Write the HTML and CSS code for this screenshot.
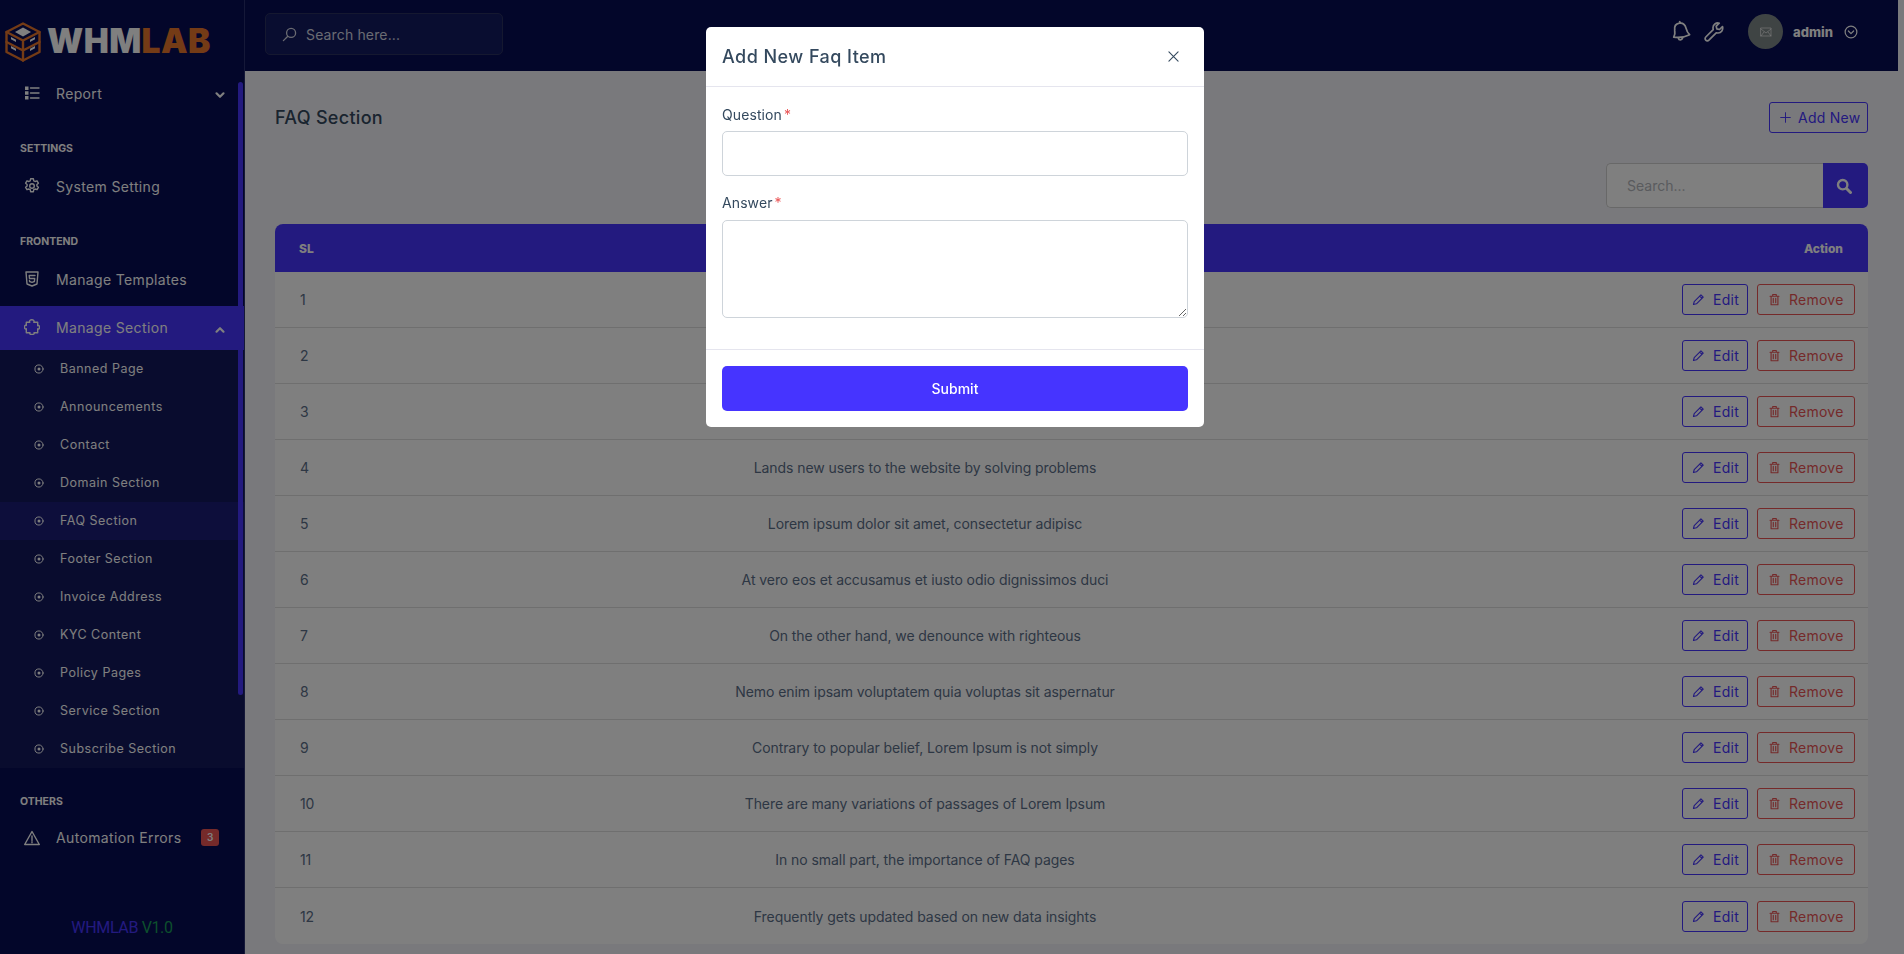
FILE: index.html
```html
<!DOCTYPE html>
<html lang="en">
<head>
    <meta charset="UTF-8">
    <meta name="viewport" content="width=device-width, initial-scale=1.0">
    <title>FAQ Section</title>
    <link rel="stylesheet" href="styles.css">
</head>
<body>
    <svg class="sprite" xmlns="http://www.w3.org/2000/svg">
        <symbol id="i-list" viewBox="0 0 16 16"><path d="M1 1.500h3.500v3.500H1zM1 6.300h3.500v3.500H1zM1 11h3.500v3.500H1z" fill="currentColor" stroke="none"/><path d="M6.500 3h8.500M6.500 8h8.500M6.500 13h8.500"/></symbol>
        <symbol id="i-gear" viewBox="0 0 16 16"><circle cx="8" cy="8" r="2.300"/><path d="M6.600.8h2.800l.4 2 1.300.7 1.900-.7 1.400 2.400-1.500 1.300v1.500l1.500 1.300-1.400 2.400-1.900-.7-1.300.7-.4 2H6.600l-.4-2-1.300-.7-1.900.7-1.400-2.400 1.500-1.300V6.500L1.600 5.200 3 2.800l1.900.7 1.300-.7z"/></symbol>
        <symbol id="i-html" viewBox="0 0 16 16"><path d="M2 1h12l-1 12-5 2-5-2z"/><path d="M11 4.500H5.200l.3 3h5.200l-.3 3-2.400.8-2.400-.8-.1-1"/></symbol>
        <symbol id="i-puzzle" viewBox="0 0 16 16"><path d="M5.800 3.300C5 1.700 6.300.7 7.800.7s2.800 1 2 2.600h3.900v3.400c1.200-.7 1.800.4 1.800 1.500s-.6 2.300-1.800 1.600v3.900H10c.7 1.200-.6 1.800-2 1.800s-2.800-.6-2.100-1.800H2.300V9.800C1 10.500.5 9.300.5 8.100S1 5.800 2.300 6.500V3.300z"/></symbol>
        <symbol id="i-warn" viewBox="0 0 16 16"><path d="M8 1.500 15.300 14.500H.7z"/><path d="M8 6v4.500M8 11.600v1.200"/></symbol>
        <symbol id="i-dot" viewBox="0 0 16 16"><circle cx="8" cy="8" r="6.500" stroke-width="1.600"/><circle cx="8" cy="8" r="2.400" fill="currentColor" stroke="none"/></symbol>
        <symbol id="i-chev" viewBox="0 0 12 12"><path d="M2.500 4.300 6 7.800l3.500-3.500" stroke-width="2.200"/></symbol>
        <symbol id="i-find" viewBox="0 0 16 16"><circle cx="9.700" cy="6.300" r="4.800"/><path d="M6.200 9.800 1.500 14.500"/></symbol>
        <symbol id="i-bell" viewBox="0 0 20 22"><path d="M9.500 3c3.800-.3 5.500 2.500 6 5.500.4 2.600 1.200 4.500 2.800 6.300-4.500 1.900-9.500 2.100-15.300 1 1.300-2 1.700-4 1.500-6.300C4.300 6.400 5.700 3.300 9.500 3z" transform="rotate(-5 10 10)"/><path d="M9.200 1.600 10 3M8 17.500c.5 2 3.300 2 4-.2"/></symbol>
        <symbol id="i-wrench" viewBox="0 0 20 20"><path d="M18.500 4.500 15.500 7.500l-2.700-.6-.6-2.700 3-3c-3-.9-6.400 1.300-6.200 4.800l.2 1.700L1.800 15a2.200 2.200 0 0 0 3.100 3.200l7.300-7.400 1.700.2c3.500.1 5.500-3.500 4.600-6.500z"/></symbol>
        <symbol id="i-down" viewBox="0 0 16 16"><circle cx="8" cy="8" r="6.700"/><path d="M5 6.800 8 9.800l3-3"/></symbol>
        <symbol id="i-pencil" viewBox="0 0 16 16"><path d="M11 2.200 13.800 5 5.500 13.300 1.800 14.200l.9-3.700zM9.500 3.700l2.800 2.800"/></symbol>
        <symbol id="i-trash" viewBox="0 0 16 16"><path d="M2.500 4h11M5.800 4V1.800h4.400V4M3.800 4v10.500h8.400V4M6.500 6.500v5.500M9.500 6.500v5.500"/></symbol>
        <symbol id="i-plus" viewBox="0 0 16 16"><path d="M8 1v14M1 8h14"/></symbol>
        <symbol id="i-loupe" viewBox="0 0 16 16"><circle cx="6.700" cy="6.700" r="4.700" stroke-width="2.400"/><path d="m10.500 10.500 4 4" stroke-width="3"/></symbol>
        <symbol id="i-close" viewBox="0 0 12 12"><path d="m1 1 10 10M11 1 1 11"/></symbol>
    </svg>

    <div class="layout">
        <aside class="sidebar">
            <div class="brand">
                <svg class="brand-mark" viewBox="0 0 36 40">
                    <path d="M18 1.500 34.500 10v20L18 38.500 1.500 30V10z" fill="none" stroke="#e8762c" stroke-width="2.400"/>
                    <path d="M1.500 10 18 18.500 34.500 10M1.500 20 18 28.500 34.500 20M18 18.500v20" fill="none" stroke="#e8762c" stroke-width="2.400"/>
                    <path d="M18 5.500 26 10l-8 4.500-8-4.500z" fill="#fff" stroke="none"/>
                    <path d="M6 15l5 2.700v2.300l-5-2.700zM25 17.700l5-2.700v2.300l-5 2.700zM6 24l5 2.700V29l-5-2.700zM25 26.700l5-2.700v2.300L25 29z" fill="#fff" stroke="none"/>
                </svg>
                <span class="brand-name">WHM<span class="brand-accent">LAB</span></span>
            </div>

            <a class="nav-row"><svg class="nav-icon"><use href="#i-list"/></svg>Report<svg class="nav-chev"><use href="#i-chev"/></svg></a>

            <div class="nav-label">SETTINGS</div>
            <a class="nav-row"><svg class="nav-icon"><use href="#i-gear"/></svg>System Setting</a>

            <div class="nav-label">FRONTEND</div>
            <a class="nav-row"><svg class="nav-icon"><use href="#i-html"/></svg>Manage Templates</a>
            <a class="nav-row nav-row-active"><svg class="nav-icon"><use href="#i-puzzle"/></svg>Manage Section<svg class="nav-chev nav-chev-up"><use href="#i-chev"/></svg></a>
            <div class="submenu">
                <a class="sub-row"><svg class="sub-icon"><use href="#i-dot"/></svg>Banned Page</a>
                <a class="sub-row"><svg class="sub-icon"><use href="#i-dot"/></svg>Announcements</a>
                <a class="sub-row"><svg class="sub-icon"><use href="#i-dot"/></svg>Contact</a>
                <a class="sub-row"><svg class="sub-icon"><use href="#i-dot"/></svg>Domain Section</a>
                <a class="sub-row sub-row-active"><svg class="sub-icon"><use href="#i-dot"/></svg>FAQ Section</a>
                <a class="sub-row"><svg class="sub-icon"><use href="#i-dot"/></svg>Footer Section</a>
                <a class="sub-row"><svg class="sub-icon"><use href="#i-dot"/></svg>Invoice Address</a>
                <a class="sub-row"><svg class="sub-icon"><use href="#i-dot"/></svg>KYC Content</a>
                <a class="sub-row"><svg class="sub-icon"><use href="#i-dot"/></svg>Policy Pages</a>
                <a class="sub-row"><svg class="sub-icon"><use href="#i-dot"/></svg>Service Section</a>
                <a class="sub-row"><svg class="sub-icon"><use href="#i-dot"/></svg>Subscribe Section</a>
            </div>

            <div class="nav-label">OTHERS</div>
            <a class="nav-row nav-row-errors"><svg class="nav-icon"><use href="#i-warn"/></svg>Automation Errors<span class="nav-badge">3</span></a>

            <div class="version"><span class="version-name">WHMLAB</span> <span class="version-num">V1.0</span></div>
            <div class="side-thumb"></div>
        </aside>

        <div class="main">
            <header class="topbar">
                <div class="top-search"><svg class="top-search-icon"><use href="#i-find"/></svg>Search here...</div>
                <div class="top-tools">
                    <svg class="top-bell"><use href="#i-bell"/></svg>
                    <svg class="top-wrench"><use href="#i-wrench"/></svg>
                    <div class="avatar"><svg viewBox="0 0 12 10"><path d="M1 1h10v8H1zM1 2l5 4 5-4M1 9l3-4M11 9 8 5"/></svg></div>
                    <span class="top-user">admin</span>
                    <svg class="top-down"><use href="#i-down"/></svg>
                </div>
            </header>

            <main class="content">
                <div class="title-row">
                    <h1>FAQ Section</h1>
                    <a class="btn-add"><svg class="btn-icon"><use href="#i-plus"/></svg>Add New</a>
                </div>
                <div class="filter-row">
                    <div class="filter">
                        <span class="filter-input">Search...</span>
                        <span class="filter-btn"><svg><use href="#i-loupe"/></svg></span>
                    </div>
                </div>

                <table class="faq-table">
                    <colgroup><col class="col-sl"><col><col class="col-action"></colgroup>
                    <thead>
                        <tr><th class="cell-left">SL</th><th>Question</th><th class="cell-right">Action</th></tr>
                    </thead>
                    <tbody>
                        <tr><td class="cell-left">1</td><td>What is a FAQ page</td><td class="cell-actions"><a class="btn-edit"><svg class="btn-icon"><use href="#i-pencil"/></svg>Edit</a><a class="btn-remove"><svg class="btn-icon"><use href="#i-trash"/></svg>Remove</a></td></tr>
                        <tr><td class="cell-left">2</td><td>Why a FAQ page matters</td><td class="cell-actions"><a class="btn-edit"><svg class="btn-icon"><use href="#i-pencil"/></svg>Edit</a><a class="btn-remove"><svg class="btn-icon"><use href="#i-trash"/></svg>Remove</a></td></tr>
                        <tr><td class="cell-left">3</td><td>How to write a FAQ page</td><td class="cell-actions"><a class="btn-edit"><svg class="btn-icon"><use href="#i-pencil"/></svg>Edit</a><a class="btn-remove"><svg class="btn-icon"><use href="#i-trash"/></svg>Remove</a></td></tr>
                        <tr><td class="cell-left">4</td><td>Lands new users to the website by solving problems</td><td class="cell-actions"><a class="btn-edit"><svg class="btn-icon"><use href="#i-pencil"/></svg>Edit</a><a class="btn-remove"><svg class="btn-icon"><use href="#i-trash"/></svg>Remove</a></td></tr>
                        <tr><td class="cell-left">5</td><td>Lorem ipsum dolor sit amet, consectetur adipisc</td><td class="cell-actions"><a class="btn-edit"><svg class="btn-icon"><use href="#i-pencil"/></svg>Edit</a><a class="btn-remove"><svg class="btn-icon"><use href="#i-trash"/></svg>Remove</a></td></tr>
                        <tr><td class="cell-left">6</td><td>At vero eos et accusamus et iusto odio dignissimos duci</td><td class="cell-actions"><a class="btn-edit"><svg class="btn-icon"><use href="#i-pencil"/></svg>Edit</a><a class="btn-remove"><svg class="btn-icon"><use href="#i-trash"/></svg>Remove</a></td></tr>
                        <tr><td class="cell-left">7</td><td>On the other hand, we denounce with righteous</td><td class="cell-actions"><a class="btn-edit"><svg class="btn-icon"><use href="#i-pencil"/></svg>Edit</a><a class="btn-remove"><svg class="btn-icon"><use href="#i-trash"/></svg>Remove</a></td></tr>
                        <tr><td class="cell-left">8</td><td>Nemo enim ipsam voluptatem quia voluptas sit aspernatur</td><td class="cell-actions"><a class="btn-edit"><svg class="btn-icon"><use href="#i-pencil"/></svg>Edit</a><a class="btn-remove"><svg class="btn-icon"><use href="#i-trash"/></svg>Remove</a></td></tr>
                        <tr><td class="cell-left">9</td><td>Contrary to popular belief, Lorem Ipsum is not simply</td><td class="cell-actions"><a class="btn-edit"><svg class="btn-icon"><use href="#i-pencil"/></svg>Edit</a><a class="btn-remove"><svg class="btn-icon"><use href="#i-trash"/></svg>Remove</a></td></tr>
                        <tr><td class="cell-left">10</td><td>There are many variations of passages of Lorem Ipsum</td><td class="cell-actions"><a class="btn-edit"><svg class="btn-icon"><use href="#i-pencil"/></svg>Edit</a><a class="btn-remove"><svg class="btn-icon"><use href="#i-trash"/></svg>Remove</a></td></tr>
                        <tr><td class="cell-left">11</td><td>In no small part, the importance of FAQ pages</td><td class="cell-actions"><a class="btn-edit"><svg class="btn-icon"><use href="#i-pencil"/></svg>Edit</a><a class="btn-remove"><svg class="btn-icon"><use href="#i-trash"/></svg>Remove</a></td></tr>
                        <tr><td class="cell-left">12</td><td>Frequently gets updated based on new data insights</td><td class="cell-actions"><a class="btn-edit"><svg class="btn-icon"><use href="#i-pencil"/></svg>Edit</a><a class="btn-remove"><svg class="btn-icon"><use href="#i-trash"/></svg>Remove</a></td></tr>
                    </tbody>
                </table>
            </main>
        </div>
    </div>

    <div class="backdrop"></div>
    <div class="modal">
        <div class="modal-head">
            <h2>Add New Faq Item</h2>
            <svg class="modal-close"><use href="#i-close"/></svg>
        </div>
        <div class="modal-body">
            <label class="field-label" for="question">Question<span class="req">*</span></label>
            <input class="field-input" id="question" type="text">
            <label class="field-label field-label-next" for="answer">Answer<span class="req">*</span></label>
            <textarea class="field-area" id="answer"></textarea>
        </div>
        <div class="modal-foot">
            <button class="btn-submit">Submit</button>
        </div>
    </div>
</body>
</html>
```

FILE: styles.css
```css
* {
    box-sizing: border-box;
}

html, body {
    height: 954px;
    overflow: hidden;
}

body {
    margin: 0;
    background: #f3f3f9;
    font-family: 'Inter', 'Open Sans', sans-serif;
    font-size: 14px;
    color: #5b6e88;
}

svg {
    fill: none;
    stroke: currentColor;
    stroke-width: 1.4;
    stroke-linecap: round;
    stroke-linejoin: round;
}

.sprite {
    display: none;
}

.layout {
    display: flex;
    width: 1898px;
    height: 954px;
}

/* sidebar */
.sidebar {
    position: relative;
    flex: 0 0 245px;
    background: #060c54;
    border-right: 1px solid #2b3070;
    color: #fff;
}

.brand {
    display: flex;
    align-items: center;
    gap: 6px;
    height: 71px;
    padding: 12px 0 0 5px;
}

.brand-mark {
    width: 36px;
    height: 40px;
}

.brand-name {
    font-size: 33.5px;
    font-weight: 900;
    letter-spacing: 0.4px;
    line-height: 1;
}

.brand-accent {
    color: #e8762c;
}

.nav-row {
    display: flex;
    align-items: center;
    height: 44px;
    padding-left: 24px;
    font-size: 14px;
    letter-spacing: 0.35px;
}

.nav-row-active {
    margin-top: 5px;
    padding-bottom: 2px;
    background: #4634ff;
}

.nav-row-errors {
    padding-bottom: 3px;
}

.nav-icon {
    width: 16px;
    height: 16px;
    margin-right: 16px;
}

.nav-chev {
    width: 12px;
    height: 12px;
    margin-left: auto;
    margin-right: 18px;
    margin-top: 3px;
}

.nav-chev-up {
    margin-top: 5px;
    transform: rotate(180deg);
}

.nav-label {
    height: 16px;
    margin-top: 26px;
    margin-bottom: 7px;
    padding-left: 20px;
    font-size: 10.5px;
    font-weight: 700;
    line-height: 16px;
}

.nav-badge {
    width: 18px;
    height: 17px;
    margin-left: 20px;
    border-radius: 3px;
    background: #ea5455;
    font-size: 10px;
    font-weight: 600;
    line-height: 17px;
    text-align: center;
}

.submenu {
    background: rgba(255, 255, 255, 0.05);
}

.sub-row {
    display: flex;
    align-items: center;
    height: 38px;
    padding-left: 34px;
    padding-bottom: 1px;
    font-size: 12.5px;
    letter-spacing: 0.5px;
}

.sub-row-active {
    background: rgba(70, 52, 255, 0.16);
}

.sub-icon {
    width: 10px;
    height: 10px;
    margin-right: 16px;
}

.version {
    position: absolute;
    left: 0;
    right: 0;
    top: 918px;
    font-family: 'Roboto', sans-serif;
    font-size: 16px;
    letter-spacing: -0.35px;
    line-height: 20px;
    text-align: center;
}

.version-name {
    color: #4634ff;
}

.version-num {
    color: #1a9f5a;
}

.side-thumb {
    position: absolute;
    top: 82px;
    left: 238px;
    width: 5px;
    height: 613px;
    border-radius: 3px;
    background: #4634ff;
}

/* top bar */
.main {
    flex: 1;
    min-width: 0;
}

.topbar {
    display: flex;
    align-items: center;
    justify-content: space-between;
    height: 71px;
    padding: 0 40px 0 20px;
    background: #060c54;
    color: #fff;
}

.top-search {
    display: flex;
    align-items: center;
    width: 238px;
    height: 42px;
    margin-bottom: 3px;
    padding-left: 16px;
    border: 1px solid #2a3060;
    border-radius: 5px;
    background: #131a60;
    font-size: 14px;
    letter-spacing: 0.15px;
    color: #d4d6e4;
}

.top-search-icon {
    width: 15px;
    height: 15px;
    margin-right: 9px;
}

.top-tools {
    display: flex;
    align-items: center;
    margin-bottom: 8px;
}

.top-bell {
    width: 21px;
    height: 23px;
    margin-right: 13px;
    stroke-width: 1.7;
}

.top-wrench {
    width: 20px;
    height: 20px;
    margin-right: 24px;
    stroke-width: 1.7;
}

.avatar {
    display: flex;
    align-items: center;
    justify-content: center;
    width: 35px;
    height: 35px;
    margin-right: 10px;
    border-radius: 50%;
    background: #7f8888;
}

.avatar svg {
    width: 12px;
    height: 10px;
    stroke-width: 0.6;
}

.top-user {
    margin-right: 11px;
    font-size: 13px;
    font-weight: 800;
}

.top-down {
    width: 14px;
    height: 14px;
}

/* page content */
.content {
    padding: 31px 30px 0;
}

.title-row {
    display: flex;
    align-items: center;
    justify-content: space-between;
    height: 31px;
}

h1 {
    margin: 0;
    font-size: 18px;
    font-weight: 500;
    letter-spacing: 0.3px;
    color: #34495e;
}

.btn-add,
.btn-edit,
.btn-remove {
    display: inline-flex;
    align-items: center;
    height: 31px;
    border: 1px solid #4634ff;
    border-radius: 3px;
    font-size: 14px;
    letter-spacing: 0.25px;
    color: #4634ff;
}

.btn-add {
    width: 99px;
    padding-left: 10px;
}

.btn-icon {
    width: 11px;
    height: 11px;
    margin-right: 7px;
}

.filter-row {
    display: flex;
    justify-content: flex-end;
    margin-top: 30px;
}

.filter {
    display: flex;
    width: 262px;
    height: 45px;
}

.filter-input {
    flex: 1;
    padding-left: 20px;
    border: 1px solid #d0d0d0;
    border-right: 0;
    border-radius: 5px 0 0 5px;
    background: #fff;
    font-size: 14px;
    line-height: 43px;
    color: #b4b7bc;
}

.filter-btn {
    display: flex;
    align-items: center;
    justify-content: center;
    width: 45px;
    padding-right: 4px;
    border-radius: 0 5px 5px 0;
    background: #4634ff;
    color: #fff;
}

.filter-btn svg {
    width: 16px;
    height: 16px;
}

.faq-table {
    width: 100%;
    margin-top: 16px;
    border-collapse: separate;
    border-spacing: 0;
    border-radius: 8px;
    background: #fff;
    table-layout: fixed;
    overflow: hidden;
}

.col-sl {
    width: 100px;
}

.col-action {
    width: 393px;
}

.faq-table th {
    height: 48px;
    background: #4634ff;
    font-size: 12px;
    font-weight: 800;
    color: #fff;
}

.faq-table td {
    height: 56px;
    border-bottom: 1px solid #dedede;
    font-size: 14px;
    letter-spacing: -0.07px;
    text-align: center;
}

.faq-table tr:last-child td {
    border-bottom: 0;
}

.faq-table .cell-left {
    padding-left: 25px;
    text-align: left;
}

.faq-table th.cell-left {
    padding-left: 24px;
}

.faq-table .cell-right {
    padding-right: 25px;
    text-align: right;
}

.faq-table .cell-actions {
    padding-right: 13px;
    text-align: right;
}

.btn-edit {
    width: 66px;
    padding-left: 9px;
}

.btn-edit .btn-icon {
    width: 13px;
    height: 13px;
    margin-right: 8px;
}

.btn-remove {
    width: 98px;
    margin-left: 9px;
    padding-left: 10px;
    border-color: #ea5455;
    color: #ea5455;
}

.btn-remove .btn-icon {
    width: 13px;
    height: 13px;
    margin-right: 8px;
}

/* modal */
.backdrop {
    position: fixed;
    inset: 0;
    background: rgba(0, 0, 0, 0.5);
}

.modal {
    position: fixed;
    top: 27px;
    left: 706px;
    width: 498px;
    border-radius: 5px;
    background: #fff;
}

.modal-head {
    display: flex;
    align-items: center;
    justify-content: space-between;
    height: 60px;
    padding: 0 25px 0 16px;
    border-bottom: 1px solid #e5e5ee;
}

h2 {
    margin: 0;
    font-size: 18px;
    font-weight: 500;
    letter-spacing: 0.45px;
    color: #34495e;
}

.modal-close {
    width: 11px;
    height: 11px;
    stroke: #34495e;
    stroke-width: 1.2;
}

.modal-body {
    height: 263px;
    padding: 18px 16px 0;
    border-bottom: 1px solid #e5e5ee;
}

.field-label {
    display: block;
    height: 20px;
    margin-bottom: 6px;
    font-size: 14px;
    letter-spacing: 0.1px;
    line-height: 20px;
    color: #34495e;
}

.field-label-next {
    margin-top: 17px;
    margin-bottom: 7px;
}

.req {
    margin-left: 2px;
    color: #ea5455;
}

.field-input,
.field-area {
    display: block;
    width: 100%;
    border: 1px solid #ced4da;
    border-radius: 5px;
    background: #fff;
}

.field-input {
    height: 45px;
}

.field-area {
    height: 98px;
}

.modal-foot {
    padding: 16px;
}

.btn-submit {
    display: block;
    width: 100%;
    height: 45px;
    border: 0;
    border-radius: 5px;
    background: #4634ff;
    font-family: inherit;
    font-size: 14px;
    font-weight: 500;
    color: #fff;
}
```
